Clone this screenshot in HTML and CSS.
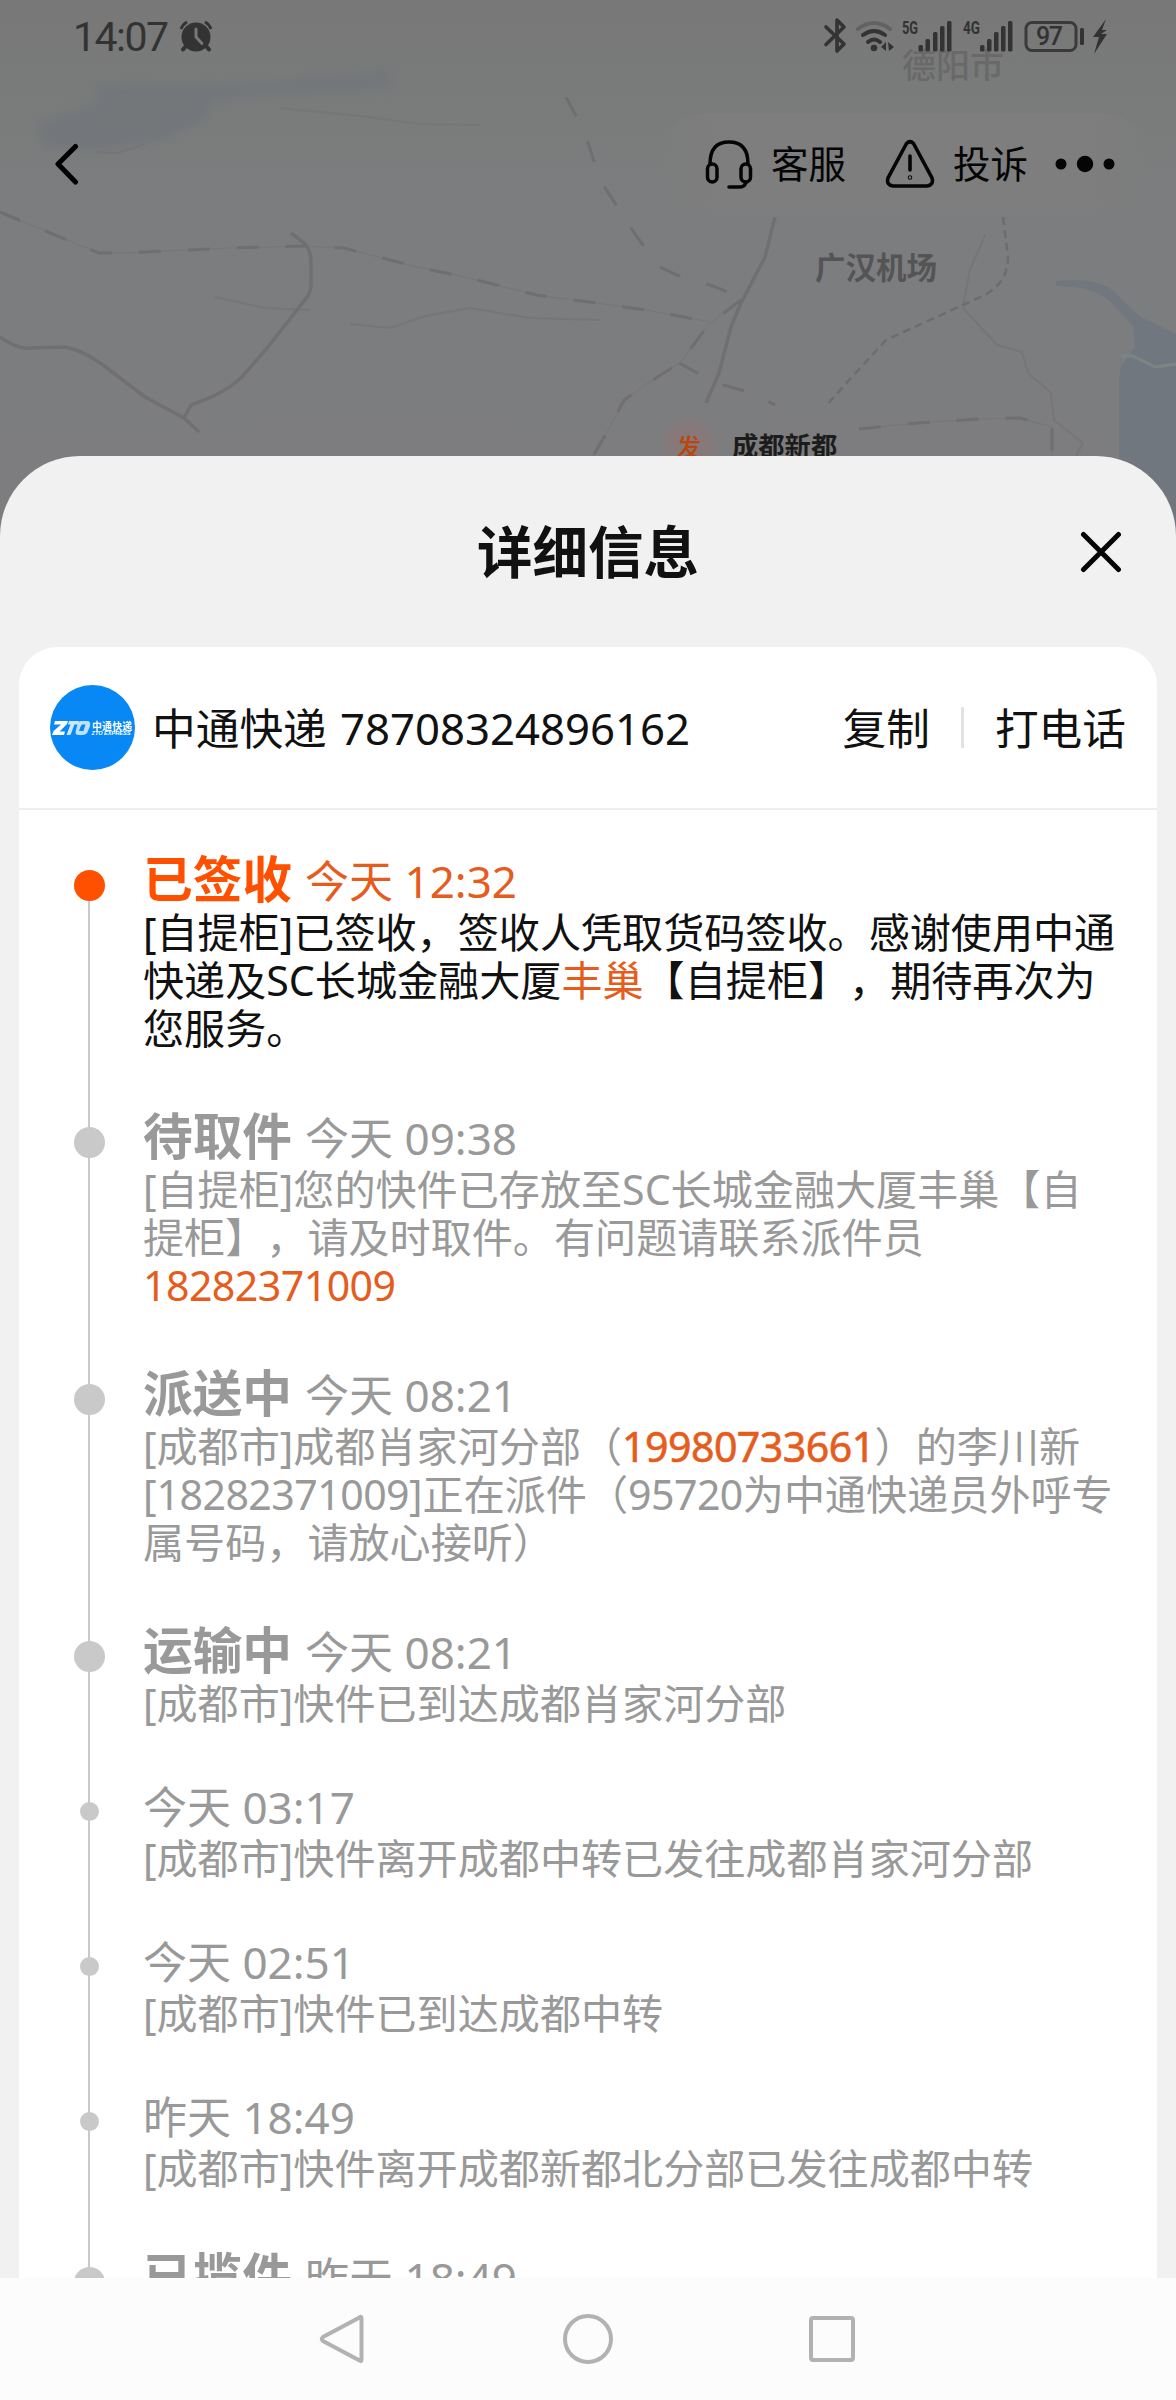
FILE: index.html
```html
<!DOCTYPE html>
<html lang="zh-CN">
<head>
<meta charset="utf-8">
<title>详细信息</title>
<link rel="stylesheet" href="styles.css">
</head>
<body>
<div class="phone">
  <svg class="map" viewBox="0 0 1176 600" width="1176" height="600" aria-hidden="true">
    <defs>
      <linearGradient id="land" x1="0" y1="0" x2="0" y2="1">
        <stop offset="0" stop-color="#777877"/><stop offset=".35" stop-color="#7c7d7e"/><stop offset="1" stop-color="#7d7d7f"/>
      </linearGradient>
      <filter id="soft"><feGaussianBlur stdDeviation="5"/></filter>
      <filter id="glow"><feGaussianBlur stdDeviation="3"/></filter>
    </defs>
    <rect width="1176" height="600" fill="url(#land)"/>
    <path filter="url(#soft)" fill="#73777a" d="M36 124 96 104V84L214 86 390 70V88L214 100 204 120 165 139 96 151 44 146Z"/>
    <path fill="#70777f" d="M1056 281Q1092 276 1112 290L1139 316 1176 334V600H1119V380L1121 366 1135 347 1133 326 1110 301Q1092 286 1056 286Z"/>
    <path fill="none" stroke="#7d8583" stroke-width="3" d="M1121 356 1133 356 1155 367 1176 364"/>
    <g class="lane">
      <path d="M96 152 118 153 145 144"/>
      <path d="M280 108 360 116 420 124 480 125"/>
      <path d="M215 297 265 308 310 310M350 324 390 328 425 316 470 308 530 318 600 320"/>
      <path d="M963 308 997 345 1022 352 1028 373 1051 393 1054 420 1083 443 1076 456"/>
      <path d="M963 305 970 270 985 235"/>
    </g>
    <g class="road">
      <path d="M0 337Q18 350 32 348L65 347Q82 350 103 365L145 397 184 418 199 432"/>
      <path d="M291 233 304 243Q311 250 311 262V285Q311 293 304 301L268 347 241 378Q222 395 191 405L184 418"/>
      <path d="M775 217 765 257 741 303 731 327 719 373 706 403"/>
    </g>
    <g class="railbed">
      <path d="M0 212 19 220 55 235 99 253 122 253 230 248 306 246 344 248 367 254 417 267 465 277 536 295 597 303 652 311 710 322"/>
      <path d="M741 300 708 325 681 362 645 385 624 400 610 427 593 456"/>
      <path d="M859 429 917 423 978 419 1020 418 1052 427 1052 456"/>
    </g>
    <g class="rail">
      <path d="M0 212 19 220 55 235 99 253 122 253 230 248 306 246 344 248 367 254 417 267 465 277 536 295 597 303 652 311 710 322"/>
      <path d="M566 97 585 133 600 180 637 237 660 267 677 275 710 285 741 297"/>
      <path d="M741 300 708 325 681 362 645 385 624 400 610 427 593 456"/>
      <path d="M679 363 716 383 752 393 775 405"/>
      <path d="M859 429 917 423 978 419 1020 418 1052 427 1052 456"/>
    </g>
    <g class="track">
      <path d="M1003 217 1008 257Q1008 282 985 295L963 305 886 340 852 377 825 407"/>
    </g>
    <text class="city" x="902" y="78">德阳市</text>
    <text class="place" x="815" y="279">广汉机场</text>
    <circle cx="689" cy="446" r="26" fill="#87797a" filter="url(#glow)"/>
    <text class="pin" x="677" y="456">发</text>
    <text class="origin" x="732" y="456">成都新都</text>
  </svg>

  <header class="status">
    <span class="clock">14:07</span>
    <svg class="alarm" width="34" height="32" viewBox="0 0 34 32">
      <circle cx="17" cy="17" r="14.5" fill="#333"/>
      <path d="M2 9Q4 4 8 2M26 2Q30 4 32 9" fill="none" stroke="#333" stroke-width="3"/>
      <path d="M7 26 4 29.500M27 26 30 29.500" stroke="#333" stroke-width="4" stroke-linecap="round"/>
      <path d="M17 9V17L23 23.500" fill="none" stroke="#777" stroke-width="3" stroke-linecap="round"/>
    </svg>
    <svg class="signals" width="290" height="40" viewBox="820 16 290 40">
      <path d="M826 27 844 44 837 51V20L844 27 826 44.500" fill="none" stroke="#333" stroke-width="3.600" stroke-linejoin="round" stroke-linecap="round"/>
      <g fill="none" stroke-linecap="round" stroke-width="4">
        <path d="M858 29Q874 17 890 29" stroke="#626262"/>
        <path d="M863 35Q874 27 885 35M868 42Q874 37 880 42" stroke="#333"/>
      </g>
      <circle cx="874" cy="48" r="3.300" fill="#333"/>
      <path d="M881 47 886 42V51ZM888 42 894 47 889 51Z" fill="#333"/>
      <g fill="#333">
        <text class="net" x="902" y="34" textLength="16" lengthAdjust="spacingAndGlyphs">5G</text>
        <rect x="918.500" y="45" width="4.500" height="6.500" rx="1.500"/><rect x="925.500" y="39" width="4.500" height="12.500" rx="1.500"/><rect x="933" y="32" width="4.500" height="19.500" rx="1.500"/><rect x="940" y="26" width="4.500" height="25.500" rx="1.500"/><rect x="947" y="21" width="4.500" height="30.500" rx="1.500"/>
        <text class="net" x="963" y="34" textLength="17" lengthAdjust="spacingAndGlyphs">4G</text>
        <rect x="980" y="45" width="4.500" height="6.500" rx="1.500"/><rect x="987" y="39" width="4.500" height="12.500" rx="1.500"/><rect x="994" y="32" width="4.500" height="19.500" rx="1.500"/><rect x="1001" y="26" width="4.500" height="25.500" rx="1.500"/><rect x="1008" y="21" width="4.500" height="30.500" rx="1.500"/>
        <rect x="1080" y="28" width="4" height="17" rx="1.500"/>
        <path d="M1106 19 1093 37H1099L1094 54 1107 34H1101L1107 30H1102Z"/>
      </g>
      <rect x="1026" y="22.500" width="50" height="28" rx="6" fill="none" stroke="#3a3a3a" stroke-width="3"/>
      <text class="charge" x="1036" y="45" textLength="27">97</text>
    </svg>
  </header>

  <div class="topbar">
    <svg class="back" width="24" height="44" viewBox="0 0 24 44"><path d="M20.500 4.500 3 22 20.500 40" fill="none" stroke="#000" stroke-width="5" stroke-linecap="round" stroke-linejoin="round"/></svg>
    <div class="actions">
      <svg width="48" height="50" viewBox="0 0 48 50" fill="none" stroke="#050505" stroke-width="3.500" stroke-linecap="round">
        <path d="M5 25Q5 3 24 3T43 25"/><rect x="2.500" y="25" width="9.500" height="18" rx="4.750"/><rect x="36" y="25" width="9.500" height="18" rx="4.750"/><path d="M41 43Q40 48 35 48H24"/>
      </svg>
      <span class="service">客服</span>
      <svg width="50" height="50" viewBox="0 0 50 50" fill="none" stroke="#050505" stroke-width="3.600" stroke-linecap="round">
        <path d="M21.500 4.500Q25 1 28.500 4.500L47 39Q49 46 42 47H8Q1 46 3 39Z"/><path d="M25 17V31"/><circle cx="25" cy="38.500" r=".5"/>
      </svg>
      <span class="complain">投诉</span>
      <svg width="60" height="20" viewBox="0 0 60 20" fill="#050505"><circle cx="6" cy="10" r="5.500"/><circle cx="30" cy="10" r="8.200"/><circle cx="54" cy="10" r="5.500"/></svg>
    </div>
  </div>

  <main class="sheet">
    <div class="sheet-head">
      <h1>详细信息</h1>
      <svg class="close" width="42" height="42" viewBox="0 0 42 42"><path d="M3.500 3.500 38.500 38.500M38.500 3.500 3.500 38.500" stroke="#050505" stroke-width="5" stroke-linecap="round"/></svg>
    </div>
    <section class="card">
      <div class="courier">
        <svg class="logo" width="85" height="85" viewBox="0 0 85 85">
          <circle cx="42.500" cy="42.500" r="42.500" fill="#0788f4"/>
          <g fill="#fff">
            <path d="M5 36H18L17 39 9.500 46.500H15L14 50H2L3.500 46 11 39.500H4Z"/>
            <path d="M19 36H29L28 39.500H24.500L20.500 50H16.500L20.500 39.500H18Z" opacity=".8"/>
            <path d="M31 36H37Q41 36 40 41L38 46Q37 50 32 50H29Q24 50 26 45L27 41Q28 36 31 36ZM32 39.500Q31 40 30 43L29 46H33.500L35.500 39.500Z" fill-rule="evenodd" opacity=".75"/>
            <text class="logo-cn" x="42" y="44.500" textLength="40">中通快递</text>
            <text class="logo-en" x="41.500" y="50" textLength="39" lengthAdjust="spacingAndGlyphs">ZTO EXPRESS</text>
          </g>
        </svg>
        <span class="number">中通快递 <span class="code">78708324896162</span></span>
        <span class="copy">复制</span>
        <i class="bar"></i>
        <span class="call">打电话</span>
      </div>
      <ol class="timeline">
        <li class="step stage current">
          <i class="dot"></i>
          <div class="head"><b>已签收</b><time>今天 12:32</time></div>
          <p>[自提柜]已签收，签收人凭取货码签收。感谢使用中通<br>快递及SC长城金融大厦<em>丰巢</em>【自提柜】，期待再次为<br>您服务。</p>
        </li>
        <li class="step stage">
          <i class="dot"></i>
          <div class="head"><b>待取件</b><time>今天 09:38</time></div>
          <p>[自提柜]您的快件已存放至SC长城金融大厦丰巢【自<br>提柜】，请及时取件。有问题请联系派件员<br><em class="digits">18282371009</em></p>
        </li>
        <li class="step stage">
          <i class="dot"></i>
          <div class="head"><b>派送中</b><time>今天 08:21</time></div>
          <p>[成都市]成都肖家河分部（<em class="digits strong">19980733661</em>）的李川新<br>[<span class="digits">18282371009</span>]正在派件（<span class="digits">95720</span>为中通快递员外呼专<br>属号码，请放心接听）</p>
        </li>
        <li class="step stage">
          <i class="dot"></i>
          <div class="head"><b>运输中</b><time>今天 08:21</time></div>
          <p>[成都市]快件已到达成都肖家河分部</p>
        </li>
        <li class="step">
          <i class="dot"></i>
          <div class="head"><time>今天 03:17</time></div>
          <p>[成都市]快件离开成都中转已发往成都肖家河分部</p>
        </li>
        <li class="step">
          <i class="dot"></i>
          <div class="head"><time>今天 02:51</time></div>
          <p>[成都市]快件已到达成都中转</p>
        </li>
        <li class="step">
          <i class="dot"></i>
          <div class="head"><time>昨天 18:49</time></div>
          <p>[成都市]快件离开成都新都北分部已发往成都中转</p>
        </li>
        <li class="step stage">
          <i class="dot"></i>
          <div class="head"><b>已揽件</b><time>昨天 18:49</time></div>
        </li>
      </ol>
    </section>
  </main>

  <nav class="nav">
    <svg width="52" height="52" viewBox="0 0 52 52"><path d="M43.500 5V47Q43.500 49 41.500 47.500L5 28Q2.500 26 5 24L41.500 4.500Q43.500 3 43.500 5Z"/></svg>
    <svg width="52" height="52" viewBox="0 0 52 52"><circle cx="26" cy="26" r="23"/></svg>
    <svg width="52" height="52" viewBox="0 0 52 52"><rect x="5" y="5" width="42" height="42" rx="2"/></svg>
  </nav>
</div>
</body>
</html>
```
FILE: styles.css
```css
* { box-sizing: border-box; margin: 0; padding: 0; }
body { width: 1176px; height: 2400px; background: #fcfcfc; font-family: "Noto Sans", "Noto Sans CJK SC", sans-serif; text-spacing-trim: space-all; }
svg { display: block; flex: none; }
.phone { position: relative; width: 1176px; height: 2400px; overflow: hidden; display: flex; flex-direction: column; }

.map { position: absolute; left: 0; top: 0; }
.lane { fill: none; stroke: #767678; stroke-width: 2; }
.road { fill: none; stroke: #707072; stroke-width: 3.5; stroke-linejoin: round; }
.railbed { fill: none; stroke: #767678; stroke-width: 1; }
.rail { fill: none; stroke: #6f6f71; stroke-width: 3; stroke-dasharray: 22 27; }
.track { fill: none; stroke: #6d6d6f; stroke-width: 2.5; stroke-dasharray: 8 5; }
.city { font-size: 34px; font-weight: 500; fill: #696969; }
.place { font-size: 30.5px; font-weight: 700; fill: #545455; }
.pin { font-size: 24px; fill: #b9450f; font-weight: 500; }
.origin { font-size: 26.3px; font-weight: 700; fill: #1c1c1c; }

.status { position: relative; height: 76px; padding: 0 66px 0 73px; display: flex; align-items: flex-start; }
.clock { width: 106px; margin-top: 13px; font: 400 41px/48px Roboto, sans-serif; letter-spacing: -1.5px; color: #333; white-space: nowrap; }
.alarm { margin-top: 20px; }
.signals { margin: 16px 0 0 auto; }
.net { font: 700 18px Roboto, sans-serif; }
.charge { font: 500 25px Roboto, sans-serif; fill: #333; }

.topbar { position: relative; height: 380px; padding: 37px 24px 0 55px; display: flex; justify-content: space-between; align-items: flex-start; }
.back { margin-top: 29px; }
.actions { height: 102px; padding: 0 37px 0 49px; border-radius: 51px; display: flex; align-items: center; background: linear-gradient(90deg, rgba(127,127,127,0), #7e7e7e 12%, #7e7e7e 88%, rgba(127,127,127,0)); font-size: 37.5px; line-height: 50px; color: #050505; }
.service { margin: 0 39px 0 18px; }
.complain { margin: 0 27px 0 18px; }

.sheet { position: relative; flex: 1; min-height: 0; overflow: hidden; padding: 0 19px; background: #f1f1f2; border-radius: 80px 80px 0 0; }
.sheet-head { height: 191px; padding: 0 35px 0 77px; display: flex; align-items: center; }
.sheet-head h1 { flex: 1; text-align: center; font-size: 55.500px; line-height: 76px; color: #111; }
.card { background: #fff; border-radius: 38px 38px 0 0; height: 1700px; }
.courier { height: 163px; padding: 0 31px; display: flex; align-items: center; border-bottom: 2px solid #eee; font-size: 43.7px; line-height: 60px; color: #111; white-space: nowrap; }
.logo-cn { font-size: 9.8px; font-weight: 700; }
.logo-en { font: italic 700 5px "Liberation Sans", sans-serif; }
.number { margin: 0 auto 0 17px; }
.code { margin-left: 2px; }
.bar { width: 3px; height: 41px; margin: 0 31px 0 31px; background: #e2e2e2; }

.timeline { list-style: none; padding-top: 33px; }
.step { position: relative; padding: 0 0 48px 124px; color: #999; }
.step::before { content: ""; position: absolute; left: 69px; top: 36px; width: 2px; height: 100%; background: #c9c9c9; }
.stage::before { top: 42px; }
.dot { position: absolute; left: 61px; top: 27px; width: 19px; height: 19px; border-radius: 50%; background: #c9c9c9; }
.stage .dot { left: 55px; top: 27px; width: 31px; height: 31px; }
.head { height: 59px; padding-top: 5px; display: flex; align-items: baseline; white-space: nowrap; }
.stage .head { height: 65px; padding-top: 11px; }
.head b { font-size: 49.700px; line-height: 49px; margin-right: 13px; }
.head time { font-size: 44px; line-height: 54px; }
.step p { font-size: 41.100px; line-height: 48px; white-space: nowrap; }
.step em { font-style: normal; color: #e55c1c; }
.digits { letter-spacing: -.55px; }
.strong { -webkit-text-stroke: .6px #e55c1c; }
.current b { color: #ff5000; }
.current time { color: #e55c1c; }
.current p { color: #111; }
.current .dot { background: #ff5000; }

.nav { position: relative; height: 122px; padding: 0 318px; display: flex; justify-content: space-between; align-items: center; background: #fcfcfc; fill: none; stroke: #b2b2b2; stroke-width: 4; }
```
